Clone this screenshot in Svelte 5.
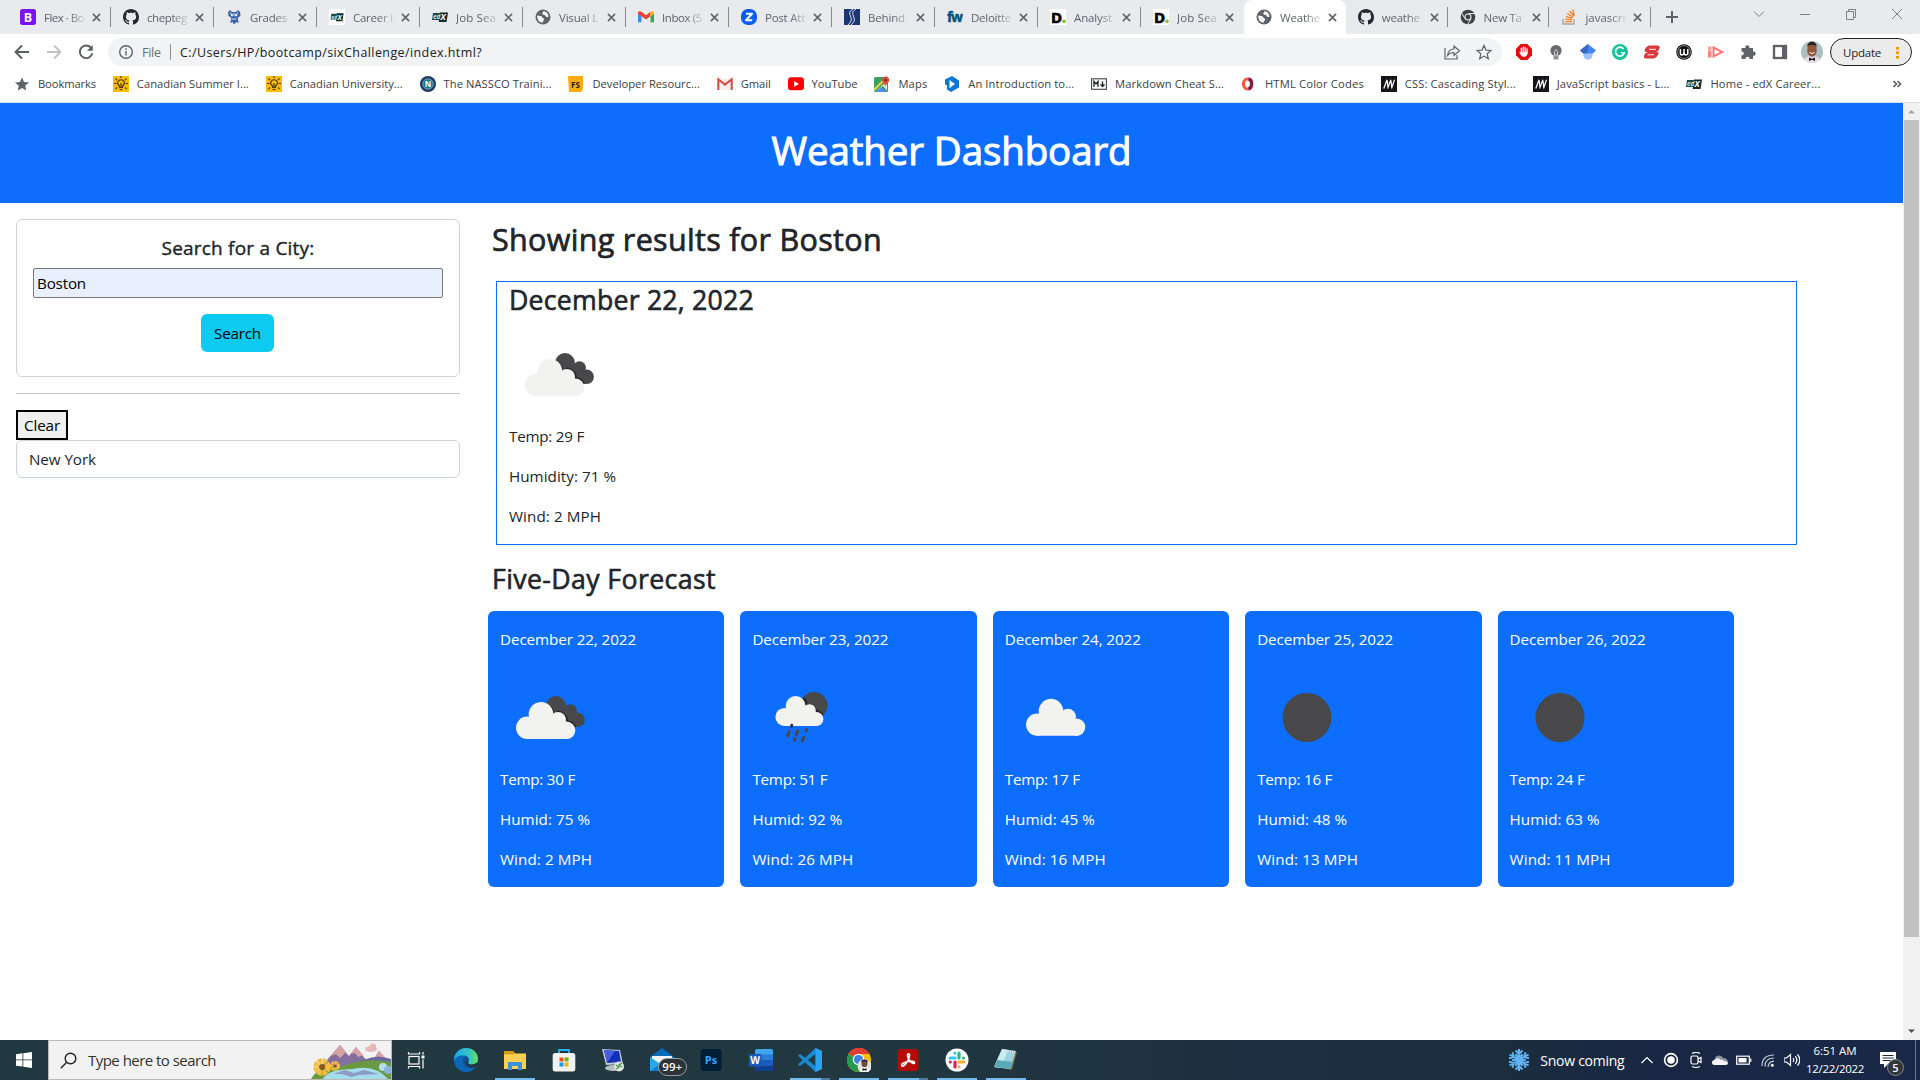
<script>
  // Tightens or loosens tracking so a label occupies the given width.
  function fit(node, width) {
    const natural = node.getBoundingClientRect().width;
    const count = node.textContent.trim().length;
    if (width && count) node.style.letterSpacing = `${(width - natural) / count}px`;
  }

  const tabs = [
    { icon: 'bootstrap', title: 'Flex · Bo', w: 40 },
    { icon: 'github', title: 'chepteg', w: 40 },
    { icon: 'grades', title: 'Grades', w: 37 },
    { icon: 'edxw', title: 'Career I', w: 40 },
    { icon: 'edx', title: 'Job Sea', w: 40 },
    { icon: 'globe', title: 'Visual L', w: 39 },
    { icon: 'gmail', title: 'Inbox (5', w: 40 },
    { icon: 'zoom', title: 'Post Att', w: 40 },
    { icon: 'behind', title: 'Behind', w: 37 },
    { icon: 'fw', title: 'Deloitte', w: 40 },
    { icon: 'deloitte', title: 'Analyst', w: 38 },
    { icon: 'deloitte', title: 'Job Sea', w: 40 },
    { icon: 'globe', title: 'Weathe', w: 40, active: true },
    { icon: 'github', title: 'weathe', w: 38 },
    { icon: 'chrome', title: 'New Ta', w: 38 },
    { icon: 'stack', title: 'javascri', w: 40 }
  ];

  const bookmarks = [
    { icon: 'starfill', text: 'Bookmarks', w: 58 },
    { icon: 'bulb', text: 'Canadian Summer I...', w: 112 },
    { icon: 'bulb', text: 'Canadian University...', w: 113 },
    { icon: 'nassco', text: 'The NASSCO Traini...', w: 108 },
    { icon: 'fs', text: 'Developer Resourc...', w: 107.5 },
    { icon: 'gmailold', text: 'Gmail', w: 30 },
    { icon: 'youtube', text: 'YouTube', w: 46 },
    { icon: 'maps', text: 'Maps', w: 29 },
    { icon: 'intro', text: 'An Introduction to...', w: 106 },
    { icon: 'markdown', text: 'Markdown Cheat S...', w: 109 },
    { icon: 'htmlcolor', text: 'HTML Color Codes', w: 99 },
    { icon: 'mdn', text: 'CSS: Cascading Styl...', w: 111 },
    { icon: 'mdn', text: 'JavaScript basics - L...', w: 113 },
    { icon: 'edx', text: 'Home - edX Career...', w: 110 }
  ];

  const extensions = ['adblock', 'lamp', 'scholar', 'grammarly', 'express', 'wordtune', 'record', 'puzzle', 'panel'];

  const forecast = [
    { date: 'December 22, 2022', icon: 'broken', temp: 30, humid: 75, wind: 2, w: [75, 90, 92] },
    { date: 'December 23, 2022', icon: 'rain', temp: 51, humid: 92, wind: 26, w: [75, 90, 101] },
    { date: 'December 24, 2022', icon: 'cloud', temp: 17, humid: 45, wind: 16, w: [75, 90, 101] },
    { date: 'December 25, 2022', icon: 'moon', temp: 16, humid: 48, wind: 13, w: [75, 90, 101] },
    { date: 'December 26, 2022', icon: 'moon', temp: 24, humid: 63, wind: 11, w: [75, 90, 101] }
  ];

  const apps = [
    { icon: 'taskview' }, { icon: 'edge' }, { icon: 'explorer', run: 'one' }, { icon: 'store' },
    { icon: 'remote' }, { icon: 'mail' }, { icon: 'ps' }, { icon: 'word' },
    { icon: 'vscode', run: 'many' }, { icon: 'chromeapp', run: 'one' }, { icon: 'acrobat', run: 'many' },
    { icon: 'slack', run: 'one' }, { icon: 'notepad', run: 'one' }
  ];
</script>

{#snippet cloudShape()}
  <circle cx="27.2" cy="60.8" r="11.2" /><circle cx="41" cy="47.3" r="12.3" />
  <circle cx="58" cy="53" r="8" /><circle cx="66.6" cy="63.3" r="8.7" />
  <path d="M27 60L40 45L57 52L68 62V72H27Z" />
{/snippet}

{#snippet weather(name)}
  <svg class="weather" viewBox="0 0 100 100">
    {#if name === 'broken'}
      <g fill="#48484a">
        <circle cx="56" cy="39" r="10" /><circle cx="70.5" cy="43.8" r="6.5" /><circle cx="77.7" cy="52.8" r="7.2" />
        <path d="M48 44L60 38L72 44L77 58L70 57Z" />
      </g>
      <path d="M46.5 37.8A12.8 12.8 0 0 1 53.6 48M57 45.2A8.5 8.5 0 0 1 66.5 54.6M66.6 54.7A8.7 8.7 0 0 1 75 60" fill="none" stroke="#252527" stroke-width="2.6" />
      <g fill="#f2f2f0">{@render cloudShape()}</g>
    {:else if name === 'rain'}
      <circle cx="62" cy="38.5" r="13.5" fill="#48484a" />
      <path d="M51.5 31A10.5 10.5 0 0 1 54 40A7 7 0 0 1 64.3 44.3A8 8 0 0 1 70.5 49" fill="none" stroke="#252527" stroke-width="2.4" />
      <g fill="#f2f2f0" transform="translate(10.4 .7) scale(.81)">{@render cloudShape()}</g>
      <path d="M37 65.2l-1.4 3.6M45.7 64l-1.4 3.6M54.6 62.6l-.5 1.4M43 71.5l-.5 1.5M51.7 70.7l-1.4 3.4" stroke="#48484a" stroke-width="3.1" stroke-linecap="round" />
      <path d="M39.8 58.200l-.4 1.300" stroke="#333" stroke-width="2.800" stroke-linecap="round" />
    {:else if name === 'cloud'}
      <g fill="#f2f2f0" transform="translate(5 -3.2)">{@render cloudShape()}</g>
    {:else}
      <circle cx="50" cy="50.5" r="24.5" fill="#48484a" />
    {/if}
  </svg>
{/snippet}

{#snippet icon(name)}
  <svg class="i16" viewBox="0 0 16 16">
    {#if name === 'bootstrap'}
      <rect width="16" height="16" rx="2.500" fill="#7a12f5" /><text x="8" y="12.6" class="b" font-size="12.5" text-anchor="middle" fill="#fff">B</text>
    {:else if name === 'github'}
      <path fill="#24292f" d="M8 0C3.58 0 0 3.58 0 8c0 3.54 2.29 6.53 5.47 7.59.4.07.55-.17.55-.38 0-.19-.01-.82-.01-1.49-2.01.37-2.53-.49-2.69-.94-.09-.23-.48-.94-.82-1.13-.28-.15-.68-.52-.01-.53.63-.01 1.08.58 1.23.82.72 1.21 1.87.87 2.33.66.07-.52.28-.87.51-1.07-1.78-.2-3.64-.89-3.64-3.95 0-.87.31-1.59.82-2.15-.08-.2-.36-1.02.08-2.12 0 0 .67-.21 2.2.82.64-.18 1.32-.27 2-.27s1.36.09 2 .27c1.53-1.04 2.2-.82 2.2-.82.44 1.1.16 1.92.08 2.12.51.56.82 1.27.82 2.15 0 3.07-1.87 3.75-3.65 3.95.29.25.54.73.54 1.48 0 1.07-.01 1.93-.01 2.2 0 .21.15.46.55.38A8 8 0 0 0 16 8c0-4.42-3.58-8-8-8z" />
    {:else if name === 'grades'}
      <path d="M2 3l2-2 2 2h4l2-2 2 2 .5 4-2.500 1.500V11l1 3-2.500-1L8 15.500 6.500 13 4 14l1-3V8.500L2.500 7z" fill="#3b66ad" /><path d="M4.500 3.500L6 7.500M11.500 3.500L10 7.500M5.500 10h5M8 4v3" stroke="#dfe7f5" stroke-width="1" fill="none" /><circle cx="6" cy="6" r="1" fill="#fff" /><circle cx="10" cy="6" r="1" fill="#fff" />
    {:else if name === 'edx' || name === 'edxw'}
      {#if name === 'edxw'}<rect width="16" height="16" fill="#fff" />{/if}
      <g transform={name === 'edxw' ? 'translate(1.5 1.500) scale(.82)' : ''}>
        <path d="M1 4h10l-1.500 7H0z" fill="#20484a" /><path d="M8 3.500h8L14.500 13H6.700z" fill="#0d2b2c" />
        <text x="1" y="9.800" class="b" font-size="6.500" font-style="italic" fill="#cfe0de">ed</text><text x="8.500" y="11.300" class="b" font-size="8.500" font-style="italic" fill="#fff">X</text>
      </g>
    {:else if name === 'globe'}
      <circle cx="8" cy="8" r="7.500" fill="#5f6368" /><path d="M2.200 6.500c2.500.2 4.500.3 5 1.700.3 1 1.800.9 2 2 .1 1.200-1.500 1.400-1.600 3.600C4 13.500 2 10.500 2.200 6.500zM8 2.200c1 1-1 1.500-.8 2.600.4 1.600 2.500.5 3.200 2 .5 1.200 1.600 1.500 3.100 1C13.600 4.500 11 2 8 2.200z" fill="#f1f3f4" />
    {:else if name === 'gmail'}
      <path d="M0 4v9.200h3.500V7z" fill="#4285f4" /><path d="M16 4v9.200h-3.500V7z" fill="#34a853" /><path d="M0 4c0-1.800 2-2.300 3.500-1.200L8 6.200l4.500-3.400v4.500L8 10.600 3.500 7.300 0 4.800z" fill="#ea4335" /><path d="M12.500 2.800C14 1.700 16 2.200 16 4v.8l-3.500 2.500z" fill="#fbbc04" />
    {:else if name === 'gmailold'}
      <rect x=".5" y="2.500" width="15" height="11.500" fill="#f3f0ee" /><path d="M1.300 14V3.300L8 8.600l6.700-5.300V14" fill="none" stroke="#d94b3f" stroke-width="2" />
    {:else if name === 'zoom'}
      <rect width="16" height="16" rx="7" fill="#0b5cff" /><path d="M5 4.800h6L5 11.200h6.200" fill="none" stroke="#fff" stroke-width="2.100" stroke-linejoin="round" />
    {:else if name === 'behind'}
      <rect width="16" height="16" fill="#1d3573" /><path d="M9 0C0 5 13 8 4 16M12 0C3 5 16 9 7 16" fill="none" stroke="#dfe5f2" stroke-width="1" />
    {:else if name === 'fw'}
      <text x="0" y="13" class="b" font-size="14" letter-spacing="-1.500" fill="#07577d" stroke="#07577d" stroke-width=".5">fw</text>
    {:else if name === 'deloitte'}
      <rect width="16" height="16" fill="#fff" /><text x="1" y="13.500" class="b" font-size="15" fill="#000" stroke="#000" stroke-width=".7">D</text><circle cx="14" cy="12.200" r="1.800" fill="#86bc25" />
    {:else if name === 'chrome'}
      <circle cx="8" cy="8" r="7.300" fill="#3c4043" /><path d="M8 4.600h7M5 9.700L1.700 4M11 9.700L7.600 15.500" stroke="#e8eaed" stroke-width="1" /><circle cx="8" cy="8" r="3.500" fill="#e8eaed" /><circle cx="8" cy="8" r="2.400" fill="#3c4043" />
    {:else if name === 'stack'}
      <path d="M2 10v5h11v-5" fill="none" stroke="#a5a7aa" stroke-width="1.400" /><path d="M4 12.600h7M4.200 10.100l6.900.8M4.900 7.300l6.500 2M6.300 4.500l5.700 3.600M8.600 2l4.300 5M11.700.5l1.700 6" stroke="#f48024" stroke-width="1.300" />
    {:else if name === 'starfill'}
      <path d="M8 1.300l2 4.600 5 .5-3.800 3.300 1.100 4.900L8 12l-4.300 2.600 1.100-4.900L1 6.400l5-.5z" fill="#5f6368" />
    {:else if name === 'bulb'}
      <rect width="16" height="16" fill="#fbbc05" /><path d="M6.500 11.500V10C2.800 7 5.200 3.700 8 3.700S13.200 7 9.500 10v1.500zM6.500 13.500h3M8 7v4M8 0v2M2.500 2.500l1.500 1.500M13.500 2.500L12 4M1 7.500h2.500M12.500 7.500H15M2.500 13L4 11.500M13.500 13L12 11.500" fill="none" stroke="#4d3a05" stroke-width="1.150" />
    {:else if name === 'nassco'}
      <circle cx="8" cy="8" r="8" fill="#203a67" /><circle cx="8" cy="8" r="5.200" fill="#137c8b" stroke="#d7e5e8" stroke-width=".5" /><text x="8" y="11" class="b" font-size="8" text-anchor="middle" fill="#fff">N</text>
    {:else if name === 'fs'}
      <path d="M0 0h15v13l-2 3H1z" fill="#ffab0a" /><text x="7.500" y="11.500" class="b" font-size="8" text-anchor="middle" fill="#222">FS</text>
    {:else if name === 'youtube'}
      <rect y="1.300" width="16" height="13" rx="3.200" fill="#f00" /><path d="M6.200 5v5.800L11 8z" fill="#fff" />
    {:else if name === 'maps'}
      <rect x="0" y="1" width="14" height="15" rx="1.500" fill="#35a35a" /><path d="M1 16L13 5v9.500L9 10z" fill="#e7e4dc" /><path d="M2 16l5-5 6 5z" fill="#4f8df7" /><path d="M0 14L12 2" stroke="#f9cf48" stroke-width="2" /><path d="M11.500 10.500c0-2-3.500-3.500-3.500-6.500a3.600 3.600 0 0 1 7.200 0c0 3-3.700 4.500-3.700 6.500z" fill="#df4c3e" /><circle cx="11.600" cy="4" r="1.300" fill="#7a211b" />
    {:else if name === 'intro'}
      <path d="M1 3.500L8 0l7 4.500v7L7 16l-4-2.500V9.500L1 8z" fill="#0878d8" /><path d="M5.500 4l5.500 4-5.500 4.300z" fill="#fff" />
    {:else if name === 'markdown'}
      <rect x=".6" y="2.800" width="14.800" height="10.500" fill="none" stroke="#404448" stroke-width="1.100" /><path d="M3 10.800V5.500l2 2.500 2-2.500v5.300M11.500 5.500V10M9.500 8.500l2 2 2-2" fill="none" stroke="#24272a" stroke-width="1.400" />
    {:else if name === 'htmlcolor'}
      <ellipse cx="6.500" cy="8" rx="4" ry="5" fill="none" stroke="#f9583a" stroke-width="3.200" /><path d="M7.500 3c4.300.5 4.300 9 0 10" fill="none" stroke="#7a1f49" stroke-width="3.200" />
    {:else if name === 'mdn'}
      <rect width="16" height="16" fill="#15141a" /><path d="M2.800 12.500L6 3.800M6.600 12.500L9.800 3.800M6.200 4.500l.8 7.500M10 4.500l.8 7.500M10.500 12.500l3-8.700" fill="none" stroke="#fff" stroke-width="1.200" />
    {:else if name === 'adblock'}
      <path d="M4.700 0h6.600L16 4.700v6.600L11.300 16H4.700L0 11.300V4.700z" fill="#e40d12" /><path d="M5.300 8V4.500M7.200 8V3.200M9.200 8V3.600M11 9V5M4 8.500C5 9 5 12 7.500 12.200 10 12.400 11 11 11.300 8" fill="#fff" stroke="#fff" stroke-width="1.300" stroke-linecap="round" />
    {:else if name === 'lamp'}
      <circle cx="8" cy="6.500" r="5.600" fill="#66696d" /><path d="M5.500 11h5v4.500h-5z" fill="#909397" /><path d="M6.500 11V7.500L8 5.500l1.500 2V11z" fill="none" stroke="#d5d5d5" />
    {:else if name === 'scholar'}
      <circle cx="8" cy="11" r="4.700" fill="#a0c3ff" /><path d="M8 0l8 6.400-3.300 3H3.300L0 6.400z" fill="#4285f4" /><path d="M8 0L0 6.400l3.300 3h2L8 7z" fill="#3a68c7" />
    {:else if name === 'grammarly'}
      <circle cx="8" cy="8" r="8" fill="#15c39a" /><path d="M11.600 5A4.500 4.500 0 1 0 12.300 8.800H9" fill="none" stroke="#fff" stroke-width="1.600" />
    {:else if name === 'express'}
      <path d="M5 1.500h8.500q3 0 2 3T12 8H2q-2-.5-1-3t4-3.500zM4 8h9q2.500 0 1 3t-4 3.500H2q-3 0-2-3T4 8z" fill="#da3940" /><path d="M5 5.300h7M3.500 10.800h6.500" stroke="#fff" stroke-width=".9" />
    {:else if name === 'wordtune'}
      <circle cx="8" cy="8" r="7.800" fill="#111" /><circle cx="8" cy="8" r="6.400" fill="none" stroke="#bbb" stroke-width=".7" /><path d="M4.400 5v4.700q0 1.200 1.600 1.200Q8 10.700 8 8.500V5v3.500q0 2.400 2 2.400t1.800-2.200V5" fill="none" stroke="#fff" stroke-width="1.500" />
    {:else if name === 'record'}
      <rect x="0" y="2.500" width="3.500" height="3.500" fill="#ff9d99" /><rect x="0" y="6.500" width="3.500" height="7" fill="#ff817f" /><path d="M5.500 3.500L14.500 8l-9 4.500z" fill="none" stroke="#ff7775" stroke-width="2" />
    {:else if name === 'puzzle'}
      <path d="M1.500 4h4C4.500 1 9.500 0 9.500 4H13v3.600c3.500-.5 3.500 4.600 0 4.200V15H9.500c.3-3-4.200-3-4 0h-4v-3.700c3.200.2 3-4 0-3.700z" fill="#5f6368" />
    {:else if name === 'panel'}
      <rect x="2" y="2" width="12" height="12" fill="none" stroke="#5f6368" stroke-width="2.300" /><rect x="10" y="2" width="4" height="12" fill="#5f6368" />
    {/if}
  </svg>
{/snippet}

{#snippet app(name)}
  <svg class="app-icon" viewBox="0 0 24 24">
    {#if name === 'taskview'}
      <g fill="none" stroke="#fff" stroke-width="1.200"><rect x="4" y="8.500" width="10" height="7.500" /><path d="M3.500 4v2h11V4M3.500 20.500v-2h11v2M18 4v2.500M18 11.500v9" /></g><rect x="16.500" y="7.500" width="3" height="3" fill="#fff" />
    {:else if name === 'edge'}
      <defs><linearGradient id="edge-a" x2="1"><stop stop-color="#22a7df" /><stop offset=".6" stop-color="#2fc5c9" /><stop offset="1" stop-color="#6bdf54" /></linearGradient></defs>
      <circle cx="12" cy="12" r="12" fill="#0c67b5" /><path d="M0 11C1 4 6 0 12 0c7 0 12 5 12 10.500 0 4-3 6-6.500 6-3 0-4.200-1.300-3.200-2.600C16 11.500 14 8 10 7.500 5 7 1 9 0 13z" fill="url(#edge-a)" /><path d="M14.300 13.900C15.600 12 14.500 9.500 12.500 8.300 9 9 8 13 10 17c2 3.500 7 4.200 11.500 2.200-1.500 2-3.500 3.700-5.500 4.200l7-4c.8-1.300.2-2-.7-1.500-3 1.400-9.500.5-8-4z" fill="#164f97" /><path d="M14.300 13.900c-1 1.300.2 2.600 3.200 2.600 2 0 3.700-.6 4.900-1.700l1.600 3-2.500 1.700C16 21 11 17.500 12 13z" fill="#21383f" />
    {:else if name === 'explorer'}
      <path d="M1 3h9l2 2.500h11V21H1z" fill="#ffce52" /><path d="M1 3h9l1.500 2L10 6.500H1z" fill="#d89a13" /><path d="M5 22v-8h14v8h-4v-4H9v4z" fill="#3c92d8" />
    {:else if name === 'store'}
      <path d="M7 6V2h10v4" fill="none" stroke="#27b1f2" stroke-width="1.800" /><rect x=".7" y="5" width="22.600" height="18.500" rx="2.500" fill="#f1f1f1" /><path fill="#e34e20" d="M7.500 9.500h4v4h-4z" /><path fill="#72b700" d="M12.500 9.500h4v4h-4z" /><path fill="#199de7" d="M7.500 14.500h4v4h-4z" /><path fill="#f5b500" d="M12.500 14.500h4v4h-4z" />
    {:else if name === 'remote'}
      <ellipse cx="12" cy="20" rx="8" ry="3" fill="#b9bec0" /><path d="M1 1l18 1 3 14-17 1z" fill="#c5cbd4" /><path d="M3 2l15 1 2 11-14 1z" fill="#1230b8" /><path d="M3 2l11 1-8 12z" fill="#4260df" /><circle cx="18" cy="18.500" r="5" fill="#e2e4e2" /><path d="M15 17l3 2-3 2M21 15l-3 2 3 2" fill="none" stroke="#42943e" stroke-width="1.300" />
    {:else if name === 'mail'}
      <path d="M0 9L12 0l12 9v14H0z" fill="#076bb9" /><path d="M2 8h20v7L12 21 2 15z" fill="#edf4f8" /><path d="M0 9l12 8L24 9v14H0z" fill="#29a9e8" /><path d="M0 23l12-8 12 8z" fill="#117fca" />
    {:else if name === 'ps'}
      <rect x="1.500" y="1" width="21" height="22" rx="4" fill="#001e36" /><text x="12" y="16" class="b" font-size="11" text-anchor="middle" fill="#31a8ff">Ps</text>
    {:else if name === 'word'}
      <rect x="6" y="1" width="18" height="22" rx="1.500" fill="#41a5ee" /><path d="M6 6.500h18V12H6z" fill="#2b7cd3" /><path d="M6 12h18v5.500H6z" fill="#185abd" /><path d="M6 17.500h18V23H6z" fill="#103f91" /><rect y="6" width="12.500" height="12.500" rx="1" fill="#185abd" /><text x="6.200" y="16" class="b" font-size="10" text-anchor="middle" fill="#fff">W</text>
    {:else if name === 'vscode'}
      <path d="M0 16.500L17.500 0 24 3v18l-6.500 3L0 7.800 2 6l15.500 12V6L2 18z" fill="#168bd2" /><path d="M17.500 0L24 3v18l-6.500 3z" fill="#27a5ed" />
    {:else if name === 'chromeapp'}
      <circle cx="12" cy="12" r="12" fill="#fbbc05" /><path d="M12 12L1.500 6A12 12 0 0 1 22.500 6H12z" fill="#df3e31" /><path d="M1.500 6A12 12 0 0 0 12 24l5-9-5-3z" fill="#279b4c" /><circle cx="11.500" cy="11.500" r="5.800" fill="#fff" /><circle cx="11.500" cy="11.500" r="4.600" fill="#3b82e7" />
      <circle cx="17.500" cy="18" r="7" fill="#e5e3e3" /><ellipse cx="17.500" cy="15.500" rx="3" ry="3.800" fill="#744939" /><path d="M14.300 14.500C13 10.500 22 10.500 20.700 14.500 19 12.500 16 12.500 14.300 14.500z" fill="#211b1b" /><path d="M12.500 22.500q1-3.500 5-3.500t5 3.500q-4 4.500-10 0z" fill="#fff" /><path d="M15.500 20l2 1 2-1v3l-2-1-2 1z" fill="#111" />
    {:else if name === 'acrobat'}
      <rect x="1.500" y="1" width="21" height="22" rx="4" fill="#b30b00" /><path d="M6 18c-2-2 3-4 6-4.500 3-.5 7-.3 6.500 1.500-.6 2-6-2-7-7-.6-3 2.500-3 2-.2C13 11 9 19 6 18z" fill="none" stroke="#fff" stroke-width="1.600" />
    {:else if name === 'slack'}
      <circle cx="12" cy="12" r="11.500" fill="#fff" /><g stroke-width="3.200" stroke-linecap="round"><path d="M5 10h5M9.800 5.200v0" stroke="#36c5f0" /><path d="M14 5v5M18.500 10h0" stroke="#2eb67d" /><path d="M14 14h5M14 18.800v0" stroke="#ecb22e" /><path d="M10 14v5M5.300 14h0" stroke="#e01e5a" /></g>
    {:else if name === 'notepad'}
      <path d="M8 2l15 2-5 18-17-3z" fill="#776540" /><path d="M8 1l14 2-5.500 18L0 19z" fill="#9ed1d8" /><path d="M8 1l6 1L7 20l-7-1z" fill="#c8edf0" /><path d="M3 12l16 2-2.500 7L0 19z" fill="#5ba9b6" /><path d="M8 2l13 2" stroke="#dce0dd" stroke-width="2" stroke-dasharray="1 1" />
    {/if}
  </svg>
{/snippet}

<div class="screen">
  <div class="tabstrip">
    {#each tabs as tab, i}
      <div class="tab" class:active={tab.active} class:bare={i === 11} class:late={i > 11}>
        {@render icon(tab.icon)}
        <div class="title"><span use:fit={tab.w}>{tab.title}</span></div>
        <svg class="x" viewBox="0 0 10 10"><path d="M1 1l8 8M9 1L1 9" /></svg>
      </div>
    {/each}
    <svg class="plus" viewBox="0 0 12 12"><path d="M6 0v12M0 6h12" /></svg>
    <div class="winctl">
      <svg viewBox="0 0 12 12"><path d="M1 3.500l5 5 5-5" /></svg>
      <svg viewBox="0 0 12 12"><path d="M1 6.500h10" /></svg>
      <svg viewBox="0 0 12 12"><path d="M1.500 3.500h7v8h-7zM3.500 3.500v-2h7v8h-2" /></svg>
      <svg viewBox="0 0 12 12"><path d="M1 1l10 10M11 1L1 11" /></svg>
    </div>
  </div>

  <div class="toolbar">
    <svg class="nav" viewBox="0 0 16 16"><path d="M15 8H2M8 1.500L1.500 8 8 14.500" /></svg>
    <svg class="nav off" viewBox="0 0 16 16"><path d="M1 8h13M8 1.500L14.500 8 8 14.500" /></svg>
    <svg class="nav" viewBox="0 0 16 16"><path d="M13.300 4.200A6.300 6.300 0 1 0 14.300 9.200" /><path d="M14.800 1v5.800H9z" class="solid" /></svg>
    <div class="omnibox">
      <svg class="info" viewBox="0 0 16 16"><circle cx="8" cy="8" r="6.300" /><path d="M8 7v4.500M8 4.300V6" /></svg>
      <span class="scheme" use:fit={21}>File</span>
      <i></i>
      <span class="url" use:fit={302}>C:/Users/HP/bootcamp/sixChallenge/index.html?</span>
      <svg class="share" viewBox="0 0 18 18"><path d="M2 5v11h12v-4M4.500 12.500C5 8 8 6 11 6V3l5.500 4.800-5.500 4.700V9.500C8 9.500 6 10.500 4.500 12.500z" /></svg>
      <svg class="share" viewBox="0 0 18 18"><path d="M9 2.500l2 4.600 4.900.4-3.700 3.300 1.100 4.900L9 13.100l-4.300 2.600 1.100-4.900-3.700-3.300 4.900-.4z" /></svg>
    </div>
    <div class="exts">{#each extensions as e}{@render icon(e)}{/each}</div>
    <svg class="avatar" viewBox="0 0 22 22">
      <defs><clipPath id="face"><circle cx="11" cy="11" r="11" /></clipPath></defs>
      <g clip-path="url(#face)"><rect width="22" height="22" fill="#aebfc3" /><path d="M2 22q1-7 9-7t9 7z" fill="#e8dfe6" /><ellipse cx="11" cy="9" rx="4.800" ry="6.800" fill="#91573c" /><path d="M6.300 6C6-1 16-1 15.700 6 14 3 8 3 6.300 6z" fill="#29201d" /><path d="M8.500 11.500q2.500 2 5 0" stroke="#fff" fill="none" /><path d="M8 16.500l3 1.300 3-1.300v3.500l-3-1.300L8 20z" fill="#1c181d" /></g>
    </svg>
    <div class="update"><span use:fit={38}>Update</span><b></b></div>
  </div>

  <div class="bookmarks">
    {#each bookmarks as b}
      <div class="bm">{@render icon(b.icon)}<span class="label" style:width="{b.w}px"><span use:fit={b.w}>{b.text}</span></span></div>
    {/each}
    <svg class="more" viewBox="0 0 10 10"><path d="M1.500 2l3 3-3 3M5.500 2l3 3-3 3" /></svg>
  </div>

  <div class="viewport">
    <div class="page">
      <header><h1><span use:fit={360}>Weather Dashboard</span></h1></header>
      <div class="content">
        <aside>
          <div class="card">
            <h5><span use:fit={153}>Search for a City:</span></h5>
            <div class="field"><span use:fit={49}>Boston</span></div>
            <div class="search"><span use:fit={47}>Search</span></div>
          </div>
          <hr />
          <div class="clear"><span use:fit={36}>Clear</span></div>
          <div class="city"><span use:fit={67}>New York</span></div>
        </aside>
        <main>
          <h2><span use:fit={390}>Showing results for Boston</span></h2>
          <section class="today">
            <h3><span use:fit={245}>December 22, 2022</span></h3>
            {@render weather('broken')}
            <p><span use:fit={75}>Temp: 29 F</span></p>
            <p><span use:fit={107}>Humidity: 71 %</span></p>
            <p><span use:fit={92}>Wind: 2 MPH</span></p>
          </section>
          <h3 class="five"><span use:fit={224}>Five-Day Forecast</span></h3>
          <div class="days">
            {#each forecast as d}
              <div class="day">
                <p><span use:fit={136}>{d.date}</span></p>
                {@render weather(d.icon)}
                <p><span use:fit={d.w[0]}>Temp: {d.temp} F</span></p>
                <p><span use:fit={d.w[1]}>Humid: {d.humid} %</span></p>
                <p><span use:fit={d.w[2]}>Wind: {d.wind} MPH</span></p>
              </div>
            {/each}
          </div>
        </main>
      </div>
    </div>
    <div class="scrollbar">
      <svg viewBox="0 0 17 17"><path d="M5 10.500h7L8.500 7z" fill="#a3a3a3" /></svg>
      <div class="thumb"></div>
      <svg viewBox="0 0 17 17"><path d="M5 6.500h7L8.500 10z" fill="#505050" /></svg>
    </div>
  </div>

  <div class="taskbar">
    <div class="start"><svg viewBox="0 0 16 16"><path fill="#fff" d="M0 2.200l6.500-.9v6.200H0zM7.300 1.200L16 0v7.500H7.300zM0 8.300h6.500v6.300L0 13.800zM7.300 8.300H16V16l-8.700-1.200z" /></svg></div>
    <div class="tsearch">
      <svg class="glass" viewBox="0 0 17 17"><circle cx="10.500" cy="6.500" r="5.300" /><path d="M6.700 10.300L.8 16.300" /></svg>
      <span use:fit={128}>Type here to search</span>
      <svg class="scene" viewBox="0 0 80 38">
        <path d="M10 26L29 4l9 11 7-9 14 18 9-14 12 16v12H10z" fill="#83709f" /><path d="M29 4l-9 11 5-2 4 4 5-5 4 3zM45 6l-5 7 4-1 3 4 5-2zM68 10l-4 7 4-2 3 3 3-2z" fill="#d9a3a6" />
        <path d="M44 26q14-15 36-8v10z" fill="#6a68a0" /><ellipse cx="60" cy="8" rx="6" ry="3" fill="#e7b7ba" /><circle cx="62" cy="5.500" r="3" fill="#e7b7ba" />
        <path d="M0 38q8-14 28-12 26-10 52-5v17z" fill="#699a43" /><path d="M12 38q5-10 30-10 22-5 35 10z" fill="#a4dcec" /><path d="M22 33l12-4 9 3 10-3 15 4-20 1-8 2-9-3z" fill="#8d9cc4" />
        <circle cx="72" cy="26" r="4" fill="#b7dcee" /><circle cx="77" cy="29" r="4" fill="#89b6d8" />
        <g fill="none" stroke="#f9bd3c"><circle cx="11" cy="26" r="6" stroke-width="5.500" stroke-dasharray="4 .7" /><circle cx="24" cy="25" r="3.300" stroke-width="3.400" stroke-dasharray="2.500 .5" /></g>
        <circle cx="11" cy="26" r="3" fill="#8b581c" /><circle cx="24" cy="25" r="1.600" fill="#8b581c" />
      </svg>
    </div>
    <div class="apps">
      {#each apps as a}
        <div class="app {a.run ?? ''}">
          {@render app(a.icon)}
          {#if a.icon === 'mail'}<span class="badge">99+</span>{/if}
        </div>
      {/each}
    </div>
    <div class="tray">
      <svg class="snow" viewBox="0 0 24 24"><g fill="none" stroke="#62b4f5" stroke-width="2"><path id="arm" d="M12 12V1M8.500 2.500L12 6l3.500-3.500M8.500 6.500L12 10l3.500-3.500" /><use href="#arm" transform="rotate(60 12 12)" /><use href="#arm" transform="rotate(120 12 12)" /><use href="#arm" transform="rotate(180 12 12)" /><use href="#arm" transform="rotate(240 12 12)" /><use href="#arm" transform="rotate(300 12 12)" /></g></svg>
      <span class="coming"><span use:fit={84}>Snow coming</span></span>
      <svg viewBox="0 0 16 16"><path d="M2.500 11L8 5.500l5.500 5.500" /></svg>
      <svg viewBox="0 0 16 16"><circle cx="8" cy="8" r="6.400" stroke-width="1.600" /><circle cx="8" cy="8" r="3.200" fill="#fff" /></svg>
      <svg viewBox="0 0 16 16"><rect x="3" y="4" width="7" height="8" rx="1.500" /><path d="M10 7l3-1.500v5L10 9M4 1.500Q8-.5 12 1.500M4 14.500q4 2 8 0" /></svg>
      <svg viewBox="0 0 16 16"><path d="M3 10a4.300 4.300 0 0 1 8-4q4-.5 5 4z" fill="#8b929e" stroke="none" /><path d="M2.500 13a2.500 2.500 0 0 1 0-5q3-3.500 6.500 0 2-1 3 1.300 4-.6 4 2-.2 1.700-2 1.700z" fill="#f5f5f5" stroke="none" /></svg>
      <svg viewBox="0 0 16 16"><rect x=".7" y="4.200" width="12.600" height="8" /><path d="M14.800 6.500v3.500" /><rect x="2.500" y="6" width="8" height="4.500" fill="#fff" stroke="none" /></svg>
      <svg viewBox="0 0 16 16"><g stroke="#c5cad2"><path d="M2 14Q2 3 14 3M5 14.500Q5 6 14 6M8 15Q8.500 9.500 14 9.200" /></g><circle cx="12.300" cy="13.300" r="1.500" fill="#fff" stroke="none" /></svg>
      <svg viewBox="0 0 16 16"><path d="M0 6h2.500L6.500 2.500v11L2.500 10H0zM9 6q1.500 2 0 4M11.300 4.200q3 3.800 0 7.600M13.500 2.300q4.500 5.700 0 11.400" /></svg>
      <div class="clock"><span use:fit={43}>6:51 AM</span><span use:fit={58}>12/22/2022</span></div>
      <div class="notice">
        <svg viewBox="0 0 16 16"><path d="M0 0h16v12H8l-4 4v-4H0z" fill="#fff" stroke="none" /><path d="M2.500 3.500h11M2.500 6h11M2.500 8.500h8" stroke="#1a2846" /></svg>
        <span class="count">5</span>
      </div>
      <i class="peek"></i>
    </div>
  </div>
</div>

<style>
  :global(body) { margin: 0; overflow: hidden; }
  .screen { width: 1920px; height: 1080px; display: flex; flex-direction: column; overflow: hidden; background: #fff; color: #212529; font-family: "Open Sans", "Noto Sans", sans-serif; }
  .screen * { box-sizing: border-box; }
  svg { display: block; flex: none; }
  span { white-space: nowrap; }
  .b { font-family: "Open Sans", sans-serif; font-weight: 700; }
  .i16 { width: 16px; height: 16px; }

  .tabstrip { height: 34px; flex: none; background: #e8eaed; padding-left: 8px; display: flex; align-items: center; }
  .tab { width: 103px; height: 20px; flex: none; display: flex; align-items: center; padding-left: 12px; border-right: 1px solid #85888c; }
  .tab.late { width: 101.800px; }
  .tab.bare { border-color: transparent; }
  .tab.active { height: 34px; background: #fff; border: 0; border-radius: 8px 8px 0 0; }
  .title { width: 41px; margin-left: 8px; font-size: 11.500px; color: #5f6368; mask-image: linear-gradient(90deg, #000 60%, rgba(0, 0, 0, .15)); }
  .x { width: 9px; height: 9px; margin-left: 7px; fill: none; stroke: #5f6368; stroke-width: 1.700; }
  .plus { width: 12px; height: 12px; margin-left: 15px; fill: none; stroke: #5f6368; stroke-width: 2; }
  .winctl { display: flex; gap: 34px; margin-left: auto; padding: 0 17px 6px 0; }
  .winctl svg { width: 12px; height: 12px; fill: none; stroke: #7d8084; stroke-width: 1; }

  .toolbar { height: 36px; flex: none; display: flex; align-items: center; padding-left: 14px; }
  .nav { width: 16px; height: 16px; margin-right: 16px; fill: none; stroke: #5a5e63; stroke-width: 1.900; }
  .nav.off { stroke: #bfc1c4; }
  .nav .solid { fill: #5a5e63; stroke: none; }
  .omnibox { width: 1394px; height: 28px; margin-left: -2px; border-radius: 14px; background: #f1f3f4; display: flex; align-items: center; font-size: 12.500px; }
  .info { width: 16px; height: 16px; margin: 0 8px 0 10px; fill: none; stroke: #5f6368; stroke-width: 1.400; }
  .scheme { width: 22px; color: #6b6f74; }
  .omnibox i { width: 1px; height: 16px; background: #888c90; margin: 0 9px 0 6px; }
  .url { color: #202124; }
  .share { width: 18px; height: 18px; margin-right: 9px; fill: none; stroke: #5f6368; stroke-width: 1.200; }
  .share:nth-last-child(2) { margin-left: auto; margin-right: 14px; }
  .exts { display: flex; gap: 16px; margin-left: 14px; }
  .avatar { width: 22px; height: 22px; margin: 0 7px 0 13px; }
  .update { width: 82px; height: 28px; border: 1px solid #202124; border-radius: 14px; background: #ececec; display: flex; align-items: center; padding: 0 12px; justify-content: space-between; font-size: 11.500px; }
  .update b { width: 3px; height: 13px; background: radial-gradient(circle, #f29900 1.400px, transparent 1.700px) 0 0 / 3px 4.500px; }

  .bookmarks { height: 33px; flex: none; display: flex; padding: 6px 18px 0 14px; border-bottom: 1px solid #dadce0; }
  .bm { height: 16px; display: flex; align-items: center; gap: 8px; margin-right: 16.850px; }
  .label { font-size: 11.200px; color: #3c4043; padding-bottom: 2px; }
  .more { width: 10px; height: 10px; margin: 3px 0 0 auto; fill: none; stroke: #5f6368; stroke-width: 1.700; }

  .viewport { height: 937px; flex: none; display: flex; }
  .page { width: 1903px; }
  header { height: 100px; background: #0d6efd; color: #fff; text-align: center; padding-top: 23px; }
  h1, h2, h3, h5 { margin: 0 0 8px; font-weight: 500; line-height: 1.200; -webkit-text-stroke: .6px currentColor; }
  h1 { font-size: 38.500px; line-height: 48px; -webkit-text-stroke-width: 1px; }
  .content { display: flex; font-size: 15.200px; line-height: 24px; }
  aside { width: 444px; margin: 16px 32px 0 16px; display: flex; flex-direction: column; }
  .card { height: 158px; border: 1px solid #d3d3d4; border-radius: 6px; padding: 16px; text-align: center; display: flex; flex-direction: column; align-items: center; }
  h5 { font-size: 19px; line-height: 24px; margin: 0 0 8px; -webkit-text-stroke-width: .4px; }
  .field { width: 410px; height: 30px; padding: 2px 3px; border: 1px solid #767676; border-radius: 2px; background: #e8f0fe; text-align: left; color: #000; }
  .search { width: 73px; height: 38px; padding-top: 7px; margin: 16px 1px 0 0; border-radius: 6px; background: #0dcaf0; color: #000; }
  hr { width: 444px; height: 1px; margin: 16px 0; border: 0; background: #c8c9ca; }
  .clear { width: 52px; height: 30px; padding: 1px 0; border: 2px solid #000; background: #efefef; color: #000; text-align: center; }
  .city { height: 38px; padding: 6px 12px; border: 1px solid #ced4da; border-radius: 6px; }
  main { width: 1320px; padding-top: 17px; }
  h2 { font-size: 30.500px; line-height: 38px; margin-bottom: 23px; -webkit-text-stroke-width: .7px; }
  h3 { font-size: 26.700px; line-height: 34px; }
  .today { width: 1301px; height: 264px; margin-left: 4px; padding: 0 12px; border: 1px solid #0d6efd; }
  .today h3 { padding-top: 1px; margin-bottom: 7px; }
  .weather { width: 100px; height: 100px; }
  p { margin: 0 0 16px; }
  .five { margin: 17px 0 15px; }
  .days { display: flex; gap: 16px; margin-left: -4px; color: #fff; }
  .day { width: 236.400px; height: 276px; flex: none; padding: 16px 12px 0; border-radius: 6px; background: #0d6efd; }
  .scrollbar { width: 17px; background: #f1f1f1; display: flex; flex-direction: column; }
  .scrollbar svg { width: 17px; height: 17px; }
  .thumb { width: 15px; height: 817px; margin: 0 1px auto; background: #c1c1c1; }

  .taskbar { height: 40px; flex: none; display: flex; background: linear-gradient(90deg, #203840, #213840 45%, #1c2f40 65%, #1b2d3e 78%, #192744 86%, #1a2849); }
  .start { width: 48px; display: grid; place-items: center; }
  .start svg { width: 16px; height: 16px; }
  .tsearch { width: 344px; display: flex; align-items: center; background: #f2f2f2; border: 1px solid #b9b9b9; font-size: 15px; color: #333; overflow: hidden; }
  .glass { width: 17px; height: 17px; margin: 0 11px; fill: none; stroke: #222; stroke-width: 1.400; }
  .scene { width: 80px; height: 38px; margin-left: auto; }
  .apps { display: flex; }
  .app { position: relative; width: 49.150px; height: 40px; display: grid; place-items: center; }
  .app-icon { width: 24px; height: 24px; }
  .one, .many { background: linear-gradient(#76b9ed, #76b9ed) center bottom / 40px 2px no-repeat; }
  .many { background: linear-gradient(90deg, #76b9ed 31px, #4e7da3 31px) center bottom / 40px 2px no-repeat; }
  .badge { position: absolute; left: 20px; top: 18px; width: 29px; height: 18px; border: 1px solid #999; border-radius: 9px; background: #2b3338; color: #fff; font-size: 11.500px; font-weight: 600; line-height: 16px; text-align: center; }
  .tray { margin-left: auto; display: flex; align-items: center; color: #fff; }
  .tray > svg { width: 16px; height: 16px; margin-right: 8.100px; fill: none; stroke: #fff; stroke-width: 1.200; }
  .tray > .snow { width: 24px; height: 24px; margin-right: 9px; }
  .coming { width: 99px; font-size: 14px; }
  .clock { width: 64px; display: flex; flex-direction: column; align-items: center; font-size: 11.500px; line-height: 17.500px; margin: -1px 13px 0 -5px; }
  .notice { position: relative; width: 28px; height: 16px; }
  .notice svg { width: 16px; height: 16px; fill: none; stroke-width: 1.200; }
  .count { position: absolute; left: 7px; top: 7px; width: 17px; height: 17px; border: 1px solid #888; border-radius: 50%; background: #30343b; font-size: 11px; font-weight: 600; line-height: 15px; text-align: center; }
  .peek { width: 1px; height: 40px; margin: 0 4px 0 7px; background: #6d7688; }
</style>
